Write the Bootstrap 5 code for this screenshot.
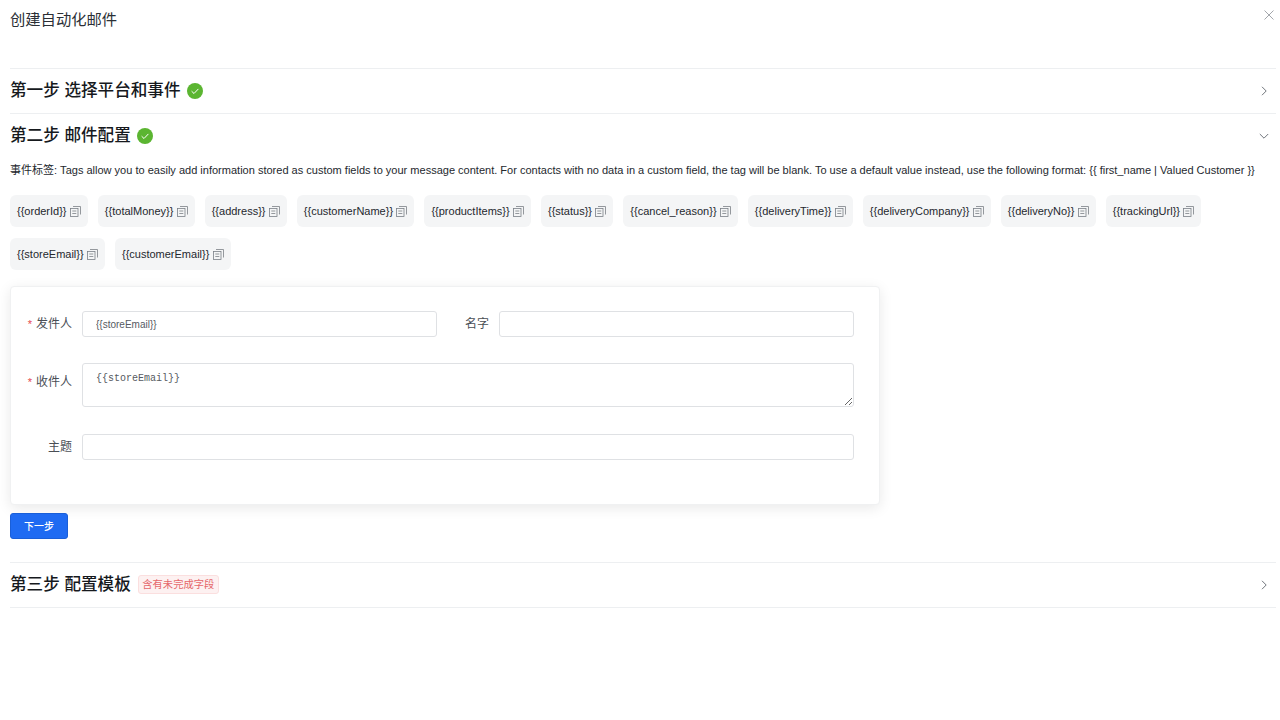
<!DOCTYPE html>
<html lang="zh">
<head>
<meta charset="utf-8">
<title>创建自动化邮件</title>
<link rel="stylesheet" href="https://cdn.jsdelivr.net/npm/bootstrap@5.3.0/dist/css/bootstrap.min.css">
<style>
body{font-family:"Liberation Sans","Noto Sans CJK SC",sans-serif;background:#fff;color:#1f2329;width:1280px;height:720px;overflow:hidden}
.shell{padding:0 4px 0 10px}
.top-bar{height:68px;padding-top:9px;font-size:15.3px;line-height:21px;color:#2b2f36}
.close-x{position:absolute;right:5px;top:9px;width:12px;height:12px;color:#a3a6ab}
.step-head{height:45px;border-top:1px solid #edeff1;font-size:16.6px;font-weight:500;color:#16191d}
.step-last{border-bottom:1px solid #edeff1;height:46px}
.step-head .ck{width:16px;height:16px;margin-left:6px}
.chev{width:10px;height:10px;color:#70757c;margin-right:7px}
.desc{font-size:11.02px;line-height:18px;color:#24282e;white-space:nowrap}
.desc-cn{font-size:11px}
.chip-wrap{gap:11px 10px;margin-top:16px}
.chip{height:32px;background:#f4f5f6;border-radius:6px;padding:0 7px;font-size:11px;color:#24282e;display:flex;align-items:center;gap:3.300px}
.chip svg{width:11px;height:11px;color:#7b8087}
.form-box{width:870px;height:219px;margin-top:16px;padding:24px 18px 0 7px;border:1px solid #f0f1f2;border-radius:4px;box-shadow:0 3px 14px rgba(0,0,0,.09)}
.lab{width:54px;flex:none;text-align:right;font-size:12px;color:#4a4e55}
.lab-top{align-self:flex-start;margin-top:10px}
.lab i{color:#e5484d;font-style:normal;margin-right:4px;font-size:11px}
.fld{height:26px;flex:none;border:1px solid #dfe1e4;border-radius:3px;font-size:10px;padding:0 13px;color:#565a61;box-shadow:none;margin-left:10px}
.fld-ta{height:44px;resize:vertical;font-family:"Liberation Mono",monospace;padding:8px 13px;line-height:13px}
.go-btn{width:58px;height:26px;margin-top:8px;padding:0;background:#1f6bf2;border:1px solid #1a5fd8;border-radius:3px;font-size:10px;color:#fff;font-weight:500}
.warn-tag{margin-left:7px;height:19px;padding:0 3.500px;font-size:10.3px;line-height:17px;font-weight:400;color:#e5676b;background:#fdf1f1;border:1px solid #fbdfdf;border-radius:3px}
.step-body{height:404px;padding-top:3px}
</style>
</head>
<body>
<div class="shell position-relative">
  <div class="top-bar">创建自动化邮件</div>
  <svg class="close-x" viewBox="0 0 12 12" fill="none" stroke="currentColor" stroke-width="1"><path d="M1.5 1.5l9 9M10.5 1.5l-9 9"/></svg>

  <div class="step-head d-flex align-items-center justify-content-between">
    <div class="d-flex align-items-center">第一步 选择平台和事件
      <svg class="ck" viewBox="0 0 16 16"><circle cx="8" cy="8" r="8" fill="#5bb531"/><path d="M4.6 8.2l2.4 2.3 4.4-4.6" fill="none" stroke="#fff" stroke-width="1"/></svg>
    </div>
    <svg class="chev" viewBox="0 0 10 10" fill="none" stroke="currentColor"><path d="M3 .8l4.2 4.2L3 9.200"/></svg>
  </div>

  <div class="step-head d-flex align-items-center justify-content-between">
    <div class="d-flex align-items-center">第二步 邮件配置
      <svg class="ck" viewBox="0 0 16 16"><circle cx="8" cy="8" r="8" fill="#5bb531"/><path d="M4.6 8.2l2.4 2.3 4.4-4.6" fill="none" stroke="#fff" stroke-width="1"/></svg>
    </div>
    <svg class="chev" viewBox="0 0 10 10" fill="none" stroke="currentColor"><path d="M.8 3L5 7.200 9.200 3"/></svg>
  </div>

  <div class="step-body">
    <div class="desc"><span class="desc-cn">事件标签</span>: Tags allow you to easily add information stored as custom fields to your message content. For contacts with no data in a custom field, the tag will be blank. To use a default value instead, use the following format: {{ first_name | Valued Customer }}</div>
    <div class="chip-wrap d-flex flex-wrap" id="chips"></div>
    <div class="form-box bg-white">
      <div class="d-flex align-items-center">
        <div class="lab"><i>*</i>发件人</div>
        <input class="form-control fld" style="width:355px" value="{{storeEmail}}">
        <div class="lab" style="width:52px">名字</div>
        <input class="form-control fld" style="width:355px">
      </div>
      <div class="d-flex align-items-center" style="margin-top:26px">
        <div class="lab lab-top"><i>*</i>收件人</div>
        <textarea class="form-control fld fld-ta" style="width:772px">{{storeEmail}}</textarea>
      </div>
      <div class="d-flex align-items-center" style="margin-top:27px">
        <div class="lab">主题</div>
        <input class="form-control fld" style="width:772px">
      </div>
    </div>
    <button class="btn btn-primary go-btn d-block" type="button">下一步</button>
  </div>

  <div class="step-head step-last d-flex align-items-center justify-content-between">
    <div class="d-flex align-items-center">第三步 配置模板<span class="warn-tag">含有未完成字段</span></div>
    <svg class="chev" viewBox="0 0 10 10" fill="none" stroke="currentColor"><path d="M3 .8l4.2 4.2L3 9.200"/></svg>
  </div>
</div>
<script>
var icon='<svg viewBox="0 0 11 11" fill="none" stroke="currentColor" stroke-width=".8"><rect x=".5" y="2.500" width="7.500" height="8"/><path d="M3 .5h7.500v8M2.300 5h4M2.300 7.500h4"/></svg>';
var tags=['orderId','totalMoney','address','customerName','productItems','status','cancel_reason','deliveryTime','deliveryCompany','deliveryNo','trackingUrl','storeEmail','customerEmail'];
document.getElementById('chips').innerHTML=tags.map(function(t){return '<div class="chip"><span>{{'+t+'}}</span>'+icon+'</div>'}).join('');
</script>
</body>
</html>
